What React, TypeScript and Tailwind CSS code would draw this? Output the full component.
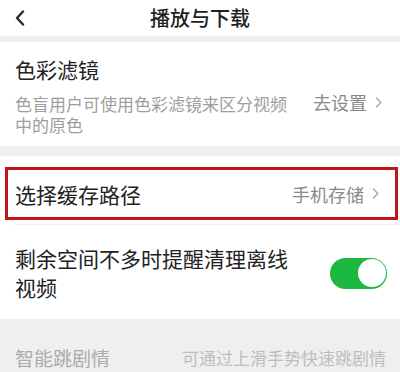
import React from "react";

const font = { fontFamily: '"Noto Sans CJK SC", "Noto Sans", sans-serif' };

function ChevronRight() {
  return (
    <svg width="7" height="11" viewBox="0 0 7 11" fill="none" className="shrink-0">
      <path d="M1.5 1 L5.8 5.5 L1.5 10" stroke="#a8a8a8" strokeWidth="1.4" strokeLinecap="round" strokeLinejoin="round" />
    </svg>
  );
}

function Toggle({ on }: { on: boolean }) {
  return (
    <div className={`w-[57px] h-[31px] rounded-full p-[1.5px] flex ${on ? "bg-[#1db83f] justify-end" : "bg-[#e5e5e5] justify-start"}`}>
      <div className="w-[28px] h-[28px] rounded-full bg-white" />
    </div>
  );
}

export default function App() {
  return (
    <div className="w-[400px] h-[372px] overflow-hidden bg-[#efefef]" style={font}>
      {/* header */}
      <div className="h-[36px] bg-white grid grid-cols-[1fr_auto_1fr] items-center px-[15px]">
        <svg width="10" height="16" viewBox="0 0 10 16" fill="none">
          <path d="M8 1.5 L2 8 L8 14.5" stroke="#2b2b2b" strokeWidth="2.4" strokeLinecap="round" strokeLinejoin="round" />
        </svg>
        <h1 className="text-[20px] leading-[28px] font-medium text-[#1f1f1f]">播放与下载</h1>
        <div />
      </div>

      <div className="h-[6px]" />

      {/* color filter */}
      <div className="bg-white pl-[15px] pr-[18px] pt-[13px] pb-[11px]">
        <div className="text-[21px] leading-[28px] text-[#222]">色彩滤镜</div>
        <div className="mt-[10px] flex items-start justify-between">
          <p className="w-[276px] text-[17px] leading-[21px] text-[#9e9e9e]">
            色盲用户可使用色彩滤镜来区分视频中的原色
          </p>
          <div className="flex items-center gap-[8px] -mt-[3px]">
            <span className="text-[18px] leading-[24px] text-[#8a8a8a]">去设置</span>
            <ChevronRight />
          </div>
        </div>
      </div>

      <div className="h-[10px]" />

      {/* storage + toggle */}
      <div className="bg-white">
        <div className="pt-[11px] px-[2px] pb-[4px]">
          <div className="ml-[3px] h-[53px] border-[3px] border-[#c0161a] flex items-center justify-between pl-[7px] pr-[16px]">
            <span className="text-[21px] leading-[28px] text-[#222]">选择缓存路径</span>
            <div className="flex items-center gap-[8px]">
              <span className="text-[18px] leading-[24px] text-[#8a8a8a]">手机存储</span>
              <ChevronRight />
            </div>
          </div>
        </div>
        <div className="ml-[15px] h-px bg-[#eeeeee]" />
        <div className="flex items-center justify-between pl-[15px] pr-[13px] pt-[19px] pb-[17px]">
          <p className="w-[285px] text-[21px] leading-[29px] text-[#222]">剩余空间不多时提醒清理离线视频</p>
          <Toggle on />
        </div>
      </div>

      {/* disabled row */}
      <div className="flex items-start justify-between pl-[15px] pr-[14px] pt-[26px]">
        <span className="text-[19px] leading-[26px] text-[#ababab]">智能跳剧情</span>
        <span className="text-[17px] leading-[26px] text-[#bdbdbd]">可通过上滑手势快速跳剧情</span>
      </div>
    </div>
  );
}
